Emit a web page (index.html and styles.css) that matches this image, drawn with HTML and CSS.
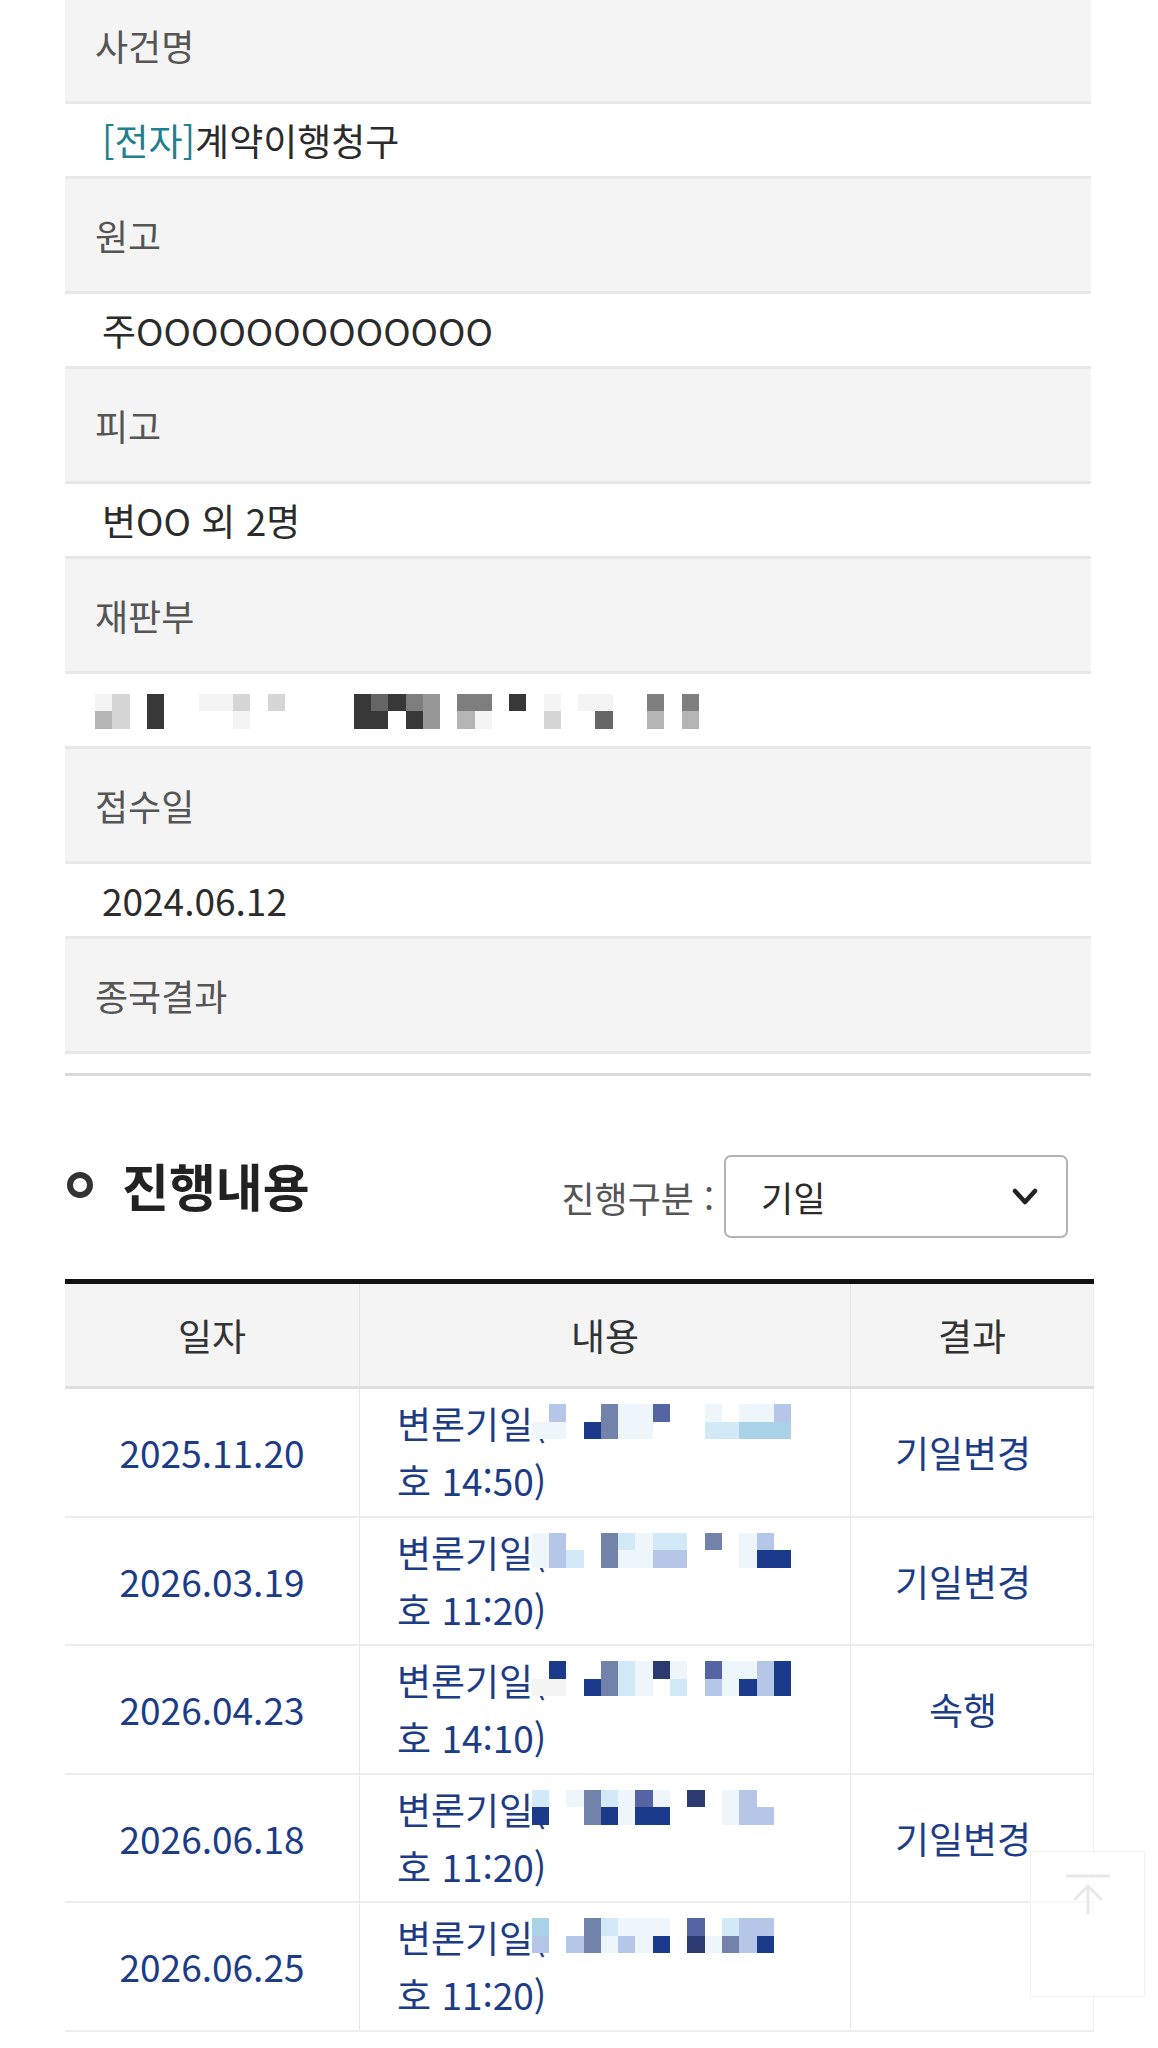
FILE: index.html
```html
<!DOCTYPE html>
<html lang="ko">
<head>
  <meta charset="UTF-8" />
  <meta name="viewport" content="width=device-width, initial-scale=1.0"/>
  <title>사건진행내용</title>
  <link rel="stylesheet" href="styles.css">
</head>
<body>
  <div class="page">

    <!-- 사건 기본정보 (위쪽이 살짝 스크롤된 상태) -->
    <div class="info">
      <div class="info-label">사건명</div>
      <div class="info-value"><span class="tag">[전자]</span>계약이행청구</div>
      <div class="info-label">원고</div>
      <div class="info-value">주OOOOOOOOOOOOO</div>
      <div class="info-label">피고</div>
      <div class="info-value">변OO 외 2명</div>
      <div class="info-label">재판부</div>
      <div class="info-value">
        <span class="mosaic wide">
          <i class="g1"></i><i class="g2"></i><i></i><i class="g7"></i><i></i><i></i><i class="g1"></i><i class="g1"></i><i class="g2"></i><i></i><i class="g2"></i><i></i><i></i><i></i><i></i><i class="g7"></i><i class="g6"></i><i class="g7"></i><i class="g5"></i><i class="g4"></i><i></i><i class="g5"></i><i class="g5"></i><i></i><i class="g7"></i><i></i><i class="g1"></i><i></i><i class="g1"></i><i class="g1"></i><i></i><i></i><i class="g5"></i><i></i><i class="g5"></i>
          <i class="g3"></i><i class="g2"></i><i></i><i class="g7"></i><i></i><i></i><i></i><i></i><i class="g1"></i><i></i><i></i><i></i><i></i><i></i><i></i><i class="g7"></i><i class="g7"></i><i></i><i class="g7"></i><i class="g4"></i><i></i><i class="g3"></i><i class="g1"></i><i></i><i></i><i></i><i class="g2"></i><i></i><i></i><i class="g6"></i><i></i><i></i><i class="g3"></i><i></i><i class="g3"></i>
        </span>
      </div>
      <div class="info-label">접수일</div>
      <div class="info-value">2024.06.12</div>
      <div class="info-label">종국결과</div>
    </div>

    <div class="divider"></div>

    <!-- 진행내용 -->
    <div class="section-head">
      <h2 class="section-title">진행내용</h2>
      <div class="filter">
        <span class="filter-label">진행구분 :</span>
        <div class="select">
          <span>기일</span>
          <svg width="26" height="18" viewBox="0 0 26 18"><polyline points="3,3 13,14 23,3" fill="none" stroke="#222" stroke-width="4.5" stroke-linecap="round" stroke-linejoin="round"/></svg>
        </div>
      </div>
    </div>

    <table class="progress">
      <thead>
        <tr><th class="col-date">일자</th><th class="col-text">내용</th><th class="col-result">결과</th></tr>
      </thead>
      <tbody>
        <tr>
          <td class="date">2025.11.20</td>
          <td class="text">변론기일(<span class="mosaic"><i></i><i class="b3"></i><i></i><i></i><i class="b5"></i><i class="b1"></i><i class="b1"></i><i class="b6"></i><i></i><i></i><i class="b1"></i><i></i><i class="b1"></i><i class="b1"></i><i class="b3"></i><i class="b1"></i><i class="b1"></i><i></i><i class="b8"></i><i class="b5"></i><i class="b1"></i><i class="b1"></i><i></i><i></i><i></i><i class="b2"></i><i class="b2"></i><i class="b4"></i><i class="b4"></i><i class="b4"></i></span><br>호 14:50)</td>
          <td class="result">기일변경</td>
        </tr>
        <tr>
          <td class="date">2026.03.19</td>
          <td class="text">변론기일(<span class="mosaic"><i class="b1"></i><i class="b3"></i><i></i><i></i><i class="b5"></i><i class="b2"></i><i class="b1"></i><i class="b2"></i><i class="b2"></i><i></i><i class="b5"></i><i></i><i class="b1"></i><i class="b3"></i><i></i><i class="b1"></i><i class="b3"></i><i class="b2"></i><i></i><i class="b5"></i><i class="b1"></i><i class="b1"></i><i class="b3"></i><i class="b3"></i><i></i><i></i><i></i><i class="b1"></i><i class="b8"></i><i class="b8"></i></span><br>호 11:20)</td>
          <td class="result">기일변경</td>
        </tr>
        <tr>
          <td class="date">2026.04.23</td>
          <td class="text">변론기일(<span class="mosaic"><i></i><i class="b8"></i><i></i><i></i><i class="b5"></i><i class="b2"></i><i class="b1"></i><i class="b7"></i><i class="b1"></i><i></i><i class="b6"></i><i class="b1"></i><i class="b1"></i><i class="b3"></i><i class="b8"></i><i class="g1"></i><i class="g1"></i><i></i><i class="b8"></i><i class="b5"></i><i class="b2"></i><i class="b1"></i><i></i><i class="b2"></i><i></i><i class="b3"></i><i class="b1"></i><i class="b8"></i><i class="b3"></i><i class="b8"></i></span><br>호 14:10)</td>
          <td class="result">속행</td>
        </tr>
        <tr>
          <td class="date">2026.06.18</td>
          <td class="text">변론기일(<span class="mosaic"><i class="b2"></i><i></i><i class="b1"></i><i class="b5"></i><i class="b2"></i><i class="b1"></i><i class="b6"></i><i class="b1"></i><i></i><i class="b7"></i><i></i><i class="b1"></i><i class="b3"></i><i></i><i></i><i class="b8"></i><i></i><i></i><i class="b5"></i><i class="b8"></i><i class="b1"></i><i class="b8"></i><i class="b8"></i><i></i><i></i><i></i><i class="b1"></i><i class="b3"></i><i class="b3"></i><i></i></span><br>호 11:20)</td>
          <td class="result">기일변경</td>
        </tr>
        <tr>
          <td class="date">2026.06.25</td>
          <td class="text">변론기일(<span class="mosaic"><i class="b4"></i><i></i><i></i><i class="b5"></i><i class="b2"></i><i class="b1"></i><i class="b1"></i><i class="b1"></i><i></i><i class="b6"></i><i></i><i class="b2"></i><i class="b3"></i><i class="b3"></i><i></i><i class="b3"></i><i></i><i class="b3"></i><i class="b5"></i><i class="b1"></i><i class="b3"></i><i class="b1"></i><i class="b8"></i><i></i><i class="b7"></i><i class="b1"></i><i class="b5"></i><i class="b3"></i><i class="b8"></i><i></i></span><br>호 11:20)</td>
          <td class="result"></td>
        </tr>
      </tbody>
    </table>

    <!-- 맨위로 -->
    <a class="to-top" href="#">
      <svg width="56" height="48" viewBox="0 0 56 48"><line x1="6" y1="6" x2="50" y2="6" stroke="#e8e8e8" stroke-width="3"/><polyline points="14,30 28,16 42,30" fill="none" stroke="#e8e8e8" stroke-width="3"/><line x1="28" y1="16" x2="28" y2="44" stroke="#e8e8e8" stroke-width="3"/></svg>
    </a>
  </div>
</body>
</html>
```

FILE: styles.css
```css
html, body {
  margin: 0;
  padding: 0;
  background: #fff;
  font-family: "Noto Sans CJK KR", "Noto Sans", sans-serif;
}

.page {
  position: relative;
  width: 1026px;
  margin-left: 65px;
  padding-bottom: 21px;
}

/* 기본정보 */
.info {
  margin-top: -11px;
}

.info-label,
.info-value {
  display: flex;
  align-items: center;
  border-bottom: 3px solid #e8e8e8;
  white-space: nowrap;
}

.info-label {
  height: 112px;
  padding-left: 30px;
  background: #f4f4f4;
  color: #555;
  font-size: 36px;
}

.info-value {
  height: 72px;
  padding-left: 37px;
  background: #fff;
  color: #2b2b2b;
  font-size: 37px;
}

.tag {
  color: #21808f;
}

.divider {
  margin-top: 19px;
  height: 3px;
  background: #d9d9d9;
}

/* 모자이크 */
.mosaic {
  display: inline-grid;
  grid-template-columns: repeat(15, 17.3px);
  grid-auto-rows: 17.5px;
  vertical-align: top;
  margin-top: 9px;
  margin-left: -14px;
}

.mosaic.wide {
  grid-template-columns: repeat(35, 17.25px);
  margin: 2px 0 0 -7px;
}

.mosaic i { background: #fff; }
.g1 { background: #f4f4f4 !important; }
.g2 { background: #d6d6d6 !important; }
.g3 { background: #b4b4b4 !important; }
.g4 { background: #989898 !important; }
.g5 { background: #7e7e7e !important; }
.g6 { background: #666 !important; }
.g7 { background: #383838 !important; }
.b1 { background: #eef5fb !important; }
.b2 { background: #d2e9f7 !important; }
.b3 { background: #b6c6e8 !important; }
.b4 { background: #a9d2e8 !important; }
.b5 { background: #7382aa !important; }
.b6 { background: #5564a2 !important; }
.b7 { background: #2b3a70 !important; }
.b8 { background: #1c3a8c !important; }

/* 진행내용 헤더 */
.section-head {
  display: flex;
  justify-content: space-between;
  height: 83px;
  margin: 79px 0 41px;
}

.section-title {
  display: flex;
  align-items: center;
  margin: 0;
  height: 60px;
  font-size: 51px;
  font-weight: bold;
  color: #222;
}

.section-title::before {
  content: "";
  width: 14px;
  height: 14px;
  border: 6px solid #333;
  border-radius: 50%;
  margin: 0 29px 0 2px;
}

.filter {
  display: flex;
  align-items: center;
  margin-right: 23px;
}

.filter-label {
  font-size: 36px;
  color: #555;
  margin-right: 10px;
}

.select {
  box-sizing: border-box;
  display: flex;
  align-items: center;
  justify-content: space-between;
  width: 344px;
  height: 83px;
  padding: 0 28px 0 35px;
  border: 2px solid #b4b4b4;
  border-radius: 7px;
  font-size: 35px;
  color: #2b2b2b;
}

/* 진행 테이블 */
.progress {
  width: 1026px;
  border-collapse: collapse;
  border-top: 5px solid #111;
  table-layout: fixed;
  font-size: 37px;
}

.col-date { width: 294px; }
.col-text { width: 490px; }
.col-result { width: 242px; }

.progress th {
  height: 102px;
  padding: 0;
  background: #f4f4f4;
  font-weight: normal;
  color: #333;
  border-bottom: 3px solid #dedede;
  border-left: 1px solid #e2e2e2;
}

.progress th:first-child,
.progress td:first-child {
  border-left: none;
}

.progress td {
  height: 126.5px;
  padding: 0;
  color: #1d3c86;
  border-bottom: 2px solid #ececec;
  border-left: 1px solid #e6e6e6;
  white-space: nowrap;
}

.progress th:last-child,
.progress td:last-child {
  border-right: 1px solid #efefef;
}

.progress td.date {
  text-align: center;
}

.progress td.text {
  padding-left: 37px;
  line-height: 57px;
}

.progress td.result {
  text-align: center;
  padding-right: 18px;
}

/* 맨위로 버튼 */
.to-top {
  position: absolute;
  left: 965px;
  top: 1862px;
  width: 115px;
  height: 146px;
  box-sizing: border-box;
  display: flex;
  justify-content: center;
  padding-top: 18px;
  border: 1px solid #f2f2f2;
  background: rgba(255, 255, 255, 0.7);
}
```
